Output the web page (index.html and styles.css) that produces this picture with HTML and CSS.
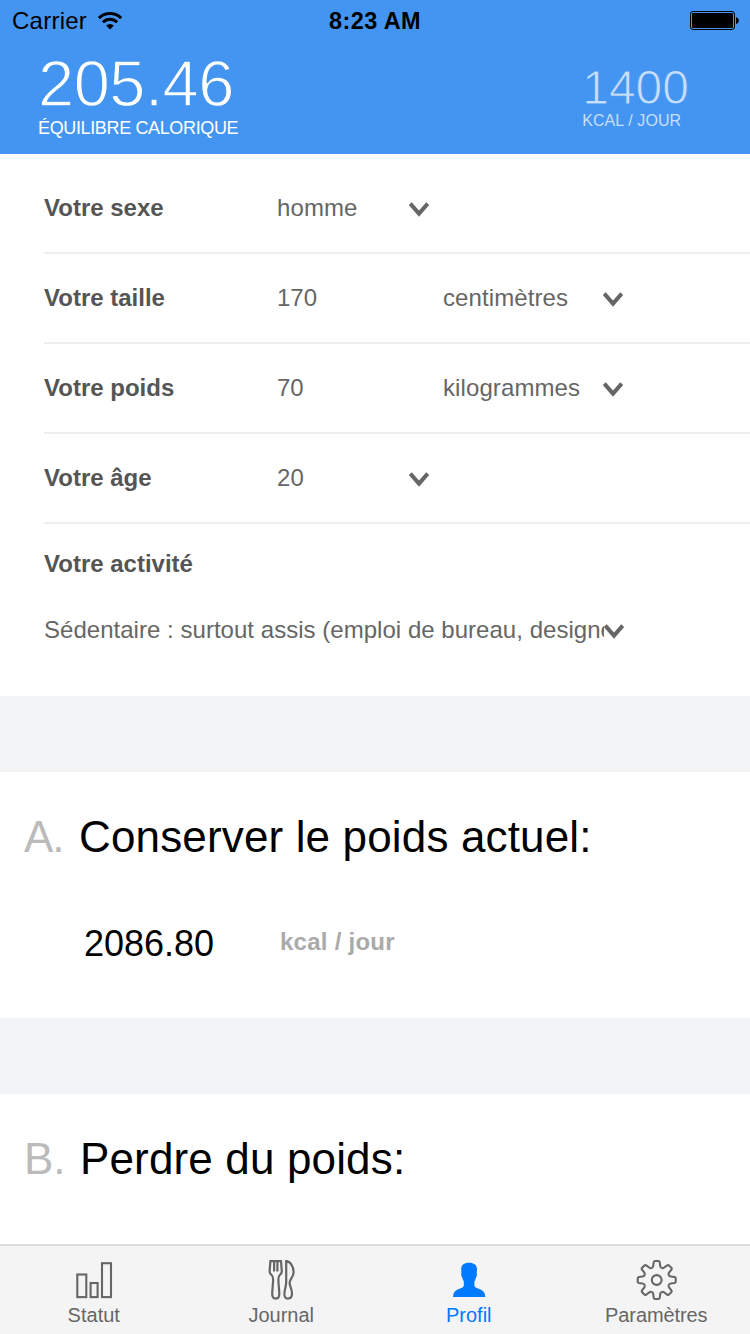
FILE: index.html
```html
<!DOCTYPE html>
<html lang="fr">
<head>
<meta charset="utf-8">
<title>Profil</title>
<link rel="stylesheet" href="styles.css">
</head>
<body>
<div class="app">
  <header class="header">
    <div class="status">
      <div class="carrier">
        <span>Carrier</span>
        <svg class="wifi" viewBox="0 0 26 20">
          <path d="M1.9 7.1A15.6 15.6 0 0 1 24.1 7.1" fill="none" stroke="#000" stroke-width="3"/>
          <path d="M5.9 11.2A10 10 0 0 1 20.1 11.2" fill="none" stroke="#000" stroke-width="2.8"/>
          <path d="M9.1 14.6A5.6 5.6 0 0 1 16.9 14.6L13 18.6Z" fill="#000"/>
        </svg>
      </div>
      <div class="time">8:23 AM</div>
      <svg class="battery" viewBox="0 0 50 20">
        <rect x=".5" y=".5" width="44" height="18" rx="2.5" fill="none" stroke="#000"/>
        <rect x="2" y="2" width="41" height="15" rx="1" fill="#000"/>
        <path d="M46 6.2Q48.8 6.8 48.8 9.6T46 13Z" fill="#000"/>
      </svg>
    </div>
    <div class="summary">
      <div class="balance">
        <div class="balance-value">205.46</div>
        <div class="balance-label">ÉQUILIBRE CALORIQUE</div>
      </div>
      <div class="goal">
        <div class="goal-value">1400</div>
        <div class="goal-label">KCAL / JOUR</div>
      </div>
    </div>
  </header>

  <main class="content">
    <section class="form">
      <div class="row row-first">
        <label>Votre sexe</label>
        <div class="select short"><span>homme</span><svg class="chevron" viewBox="0 0 20 15"><path d="M1.3 1.6L10 11.6L18.7 1.6"/></svg></div>
      </div>
      <div class="row">
        <label>Votre taille</label>
        <span class="value">170</span>
        <div class="select unit"><span>centimètres</span><svg class="chevron" viewBox="0 0 20 15"><path d="M1.3 1.6L10 11.6L18.7 1.6"/></svg></div>
      </div>
      <div class="row">
        <label>Votre poids</label>
        <span class="value">70</span>
        <div class="select unit"><span>kilogrammes</span><svg class="chevron" viewBox="0 0 20 15"><path d="M1.3 1.6L10 11.6L18.7 1.6"/></svg></div>
      </div>
      <div class="row">
        <label>Votre âge</label>
        <div class="select short"><span>20</span><svg class="chevron" viewBox="0 0 20 15"><path d="M1.3 1.6L10 11.6L18.7 1.6"/></svg></div>
      </div>
      <div class="activity">
        <label>Votre activité</label>
        <div class="select wide"><span class="clip">Sédentaire : surtout assis (emploi de bureau, designer)</span><svg class="chevron" viewBox="0 0 20 15"><path d="M1.3 1.6L10 11.6L18.7 1.6"/></svg></div>
      </div>
    </section>

    <section class="card">
      <h2><span class="letter">A.</span><span class="title">Conserver le poids actuel:</span></h2>
      <div class="result"><span class="amount">2086.80</span><span class="per">kcal / jour</span></div>
    </section>

    <section class="card">
      <h2><span class="letter letter-b">B.</span><span class="title">Perdre du poids:</span></h2>
    </section>
  </main>

  <nav class="tabs">
    <a class="tab">
      <svg class="icon" viewBox="0 0 44 44">
        <rect x="5.3" y="16.5" width="9" height="22.6"/>
        <rect x="18.6" y="25" width="7" height="14.1"/>
        <rect x="30" y="5.2" width="9" height="33.9"/>
      </svg>
      <span>Statut</span>
    </a>
    <a class="tab">
      <svg class="icon cutlery" viewBox="0 0 44 44">
        <path d="M11.4 3.2H22L22.8 13.4Q22.9 15.4 20.8 17Q19.4 18.2 19.4 21.2C19.4 27 20.3 32 20.3 36Q20.3 40.6 16.8 40.6Q13.2 40.6 13.2 36C13.2 32 14.1 27 14.1 21.2Q14.1 18.2 12.6 17Q10.5 15.4 10.6 13.4Z"/>
        <path d="M15.1 3V13.4M18.4 3V13.4"/>
        <path d="M27.2 3.2V24C27.2 28.5 25.4 32 25.4 36Q25.4 40.6 28.8 40.6Q33 40.6 33 35.5C33 31 30.6 28 30.6 24.8C30.6 20.8 34.8 19 34.6 14C34.4 8 31 3.2 27.2 3.2Z"/>
      </svg>
      <span>Journal</span>
    </a>
    <a class="tab active">
      <svg class="icon" viewBox="0 0 44 44">
        <path d="M22 4.8C27 4.8 30 7.2 30 11.2L29.7 14.6Q30.4 17.4 29.3 18.8Q28.6 21.6 27.4 23.6V27.4Q27.6 29 29.2 29.8L33.6 31.6Q38.3 33.8 38.3 38.9H6Q6 33.8 10.6 31.6L15 29.8Q16.6 29 16.8 27.4V23.6Q15.6 21.6 14.9 18.8Q13.8 17.4 14.4 14.6L14.2 11.2C14.2 7.2 17 4.8 22 4.8Z"/>
      </svg>
      <span>Profil</span>
    </a>
    <a class="tab">
      <svg class="icon" viewBox="0 0 44 44">
        <defs><path id="tooth" d="M-5 -12.07Q-3.7 -12.6 -3.5 -14.2L-3 -17.8Q-2.8 -19 -1.6 -19H1.6Q2.8 -19 3 -17.8L3.5 -14.2Q3.7 -12.6 5 -12.07"/></defs>
        <g transform="translate(22.7 22)">
          <circle r="4.9"/>
          <use href="#tooth"/>
          <use href="#tooth" transform="rotate(45)"/>
          <use href="#tooth" transform="rotate(90)"/>
          <use href="#tooth" transform="rotate(135)"/>
          <use href="#tooth" transform="rotate(180)"/>
          <use href="#tooth" transform="rotate(225)"/>
          <use href="#tooth" transform="rotate(270)"/>
          <use href="#tooth" transform="rotate(315)"/>
        </g>
      </svg>
      <span class="settings">Paramètres</span>
    </a>
  </nav>
</div>
</body>
</html>
```
FILE: styles.css
```css
* { box-sizing: border-box; }
body {
  margin: 0;
  font-family: "Liberation Sans", Arial, sans-serif;
  background: #fff;
  color: #000;
}
.app {
  width: 750px;
  height: 1334px;
  display: flex;
  flex-direction: column;
  overflow: hidden;
}

/* Header */
.header {
  height: 154px;
  flex: none;
  background: #4495f1;
}
.status {
  height: 40px;
  padding: 0 11px 0 12px;
  display: grid;
  grid-template-columns: 1fr auto 1fr;
  align-items: center;
  font-size: 24px;
  line-height: 40px;
}
.carrier { display: flex; align-items: center; gap: 10px; letter-spacing: .25px; }
.wifi { width: 26px; height: 20px; }
.time { font-weight: bold; font-size: 23.5px; letter-spacing: .4px; padding-top: 1px; margin-left: -1px; }
.battery { width: 50px; height: 20px; justify-self: end; margin-right: -1px; }
.summary {
  display: flex;
  justify-content: space-between;
  padding: 12px 61px 0 38px;
  color: #fff;
  white-space: nowrap;
}
.balance-value {
  font-size: 65px;
  line-height: 64px;
  letter-spacing: -.5px;
  -webkit-text-stroke: 1.3px #4495f1;
}
.balance-label { font-size: 18px; line-height: 24px; letter-spacing: -.36px; }
.goal { padding-top: 12px; color: #c7dffb; }
.goal-value {
  font-size: 48px;
  line-height: 48px;
  -webkit-text-stroke: 1px #4495f1;
}
.goal-label { font-size: 16px; line-height: 18px; letter-spacing: .08px; }

/* Form */
.content { flex: 1; min-height: 0; overflow: hidden; }
.form {
  height: 542px;
  padding-left: 44px;
  font-size: 24px;
  line-height: 28px;
  color: #666;
}
label { font-weight: bold; color: #555; }
.row {
  height: 90px;
  border-bottom: 2px solid #eee;
  display: grid;
  grid-template-columns: 233px 166px 1fr;
  align-items: center;
}
.row-first { height: 100px; padding-top: 10px; }
.select {
  display: flex;
  align-items: center;
  justify-content: space-between;
  letter-spacing: .1px;
}
.short { width: 152px; }
.unit { width: 180px; }
.wide { width: 580px; margin-top: 38px; letter-spacing: .03px; }
.clip { width: 560px; flex: none; overflow: hidden; white-space: nowrap; }
.chevron {
  width: 20px;
  height: 15px;
  margin-top: 3px;
  flex: none;
  fill: none;
  stroke: #666;
  stroke-width: 4;
}
.activity { padding-top: 26px; }
.activity label { display: block; }

/* Result cards */
.card {
  height: 322px;
  border-top: 76px solid #f2f3f5;
  padding: 40px 24px 0;
}
h2 {
  margin: 0;
  display: flex;
  font-size: 44px;
  line-height: 50px;
  font-weight: normal;
}
.letter { width: 55px; color: #bbb; letter-spacing: -1px; }
.letter-b { width: 56px; letter-spacing: 0; }
.title { letter-spacing: .15px; }
.result { display: flex; align-items: center; padding: 60px 0 0 60px; }
.amount { width: 196px; font-size: 36px; line-height: 44px; }
.per {
  margin-top: -5px;
  font-size: 24px;
  line-height: 28px;
  font-weight: bold;
  letter-spacing: .25px;
  color: #aaa;
}

/* Tab bar */
.tabs {
  height: 90px;
  flex: none;
  display: grid;
  grid-template-columns: repeat(4, 1fr);
  background: #f4f4f4;
  border-top: 2px solid #dcdcdc;
}
.tab {
  padding-top: 12px;
  display: flex;
  flex-direction: column;
  align-items: center;
  font-size: 20px;
  line-height: 26px;
  color: #666;
}
.icon {
  width: 44px;
  height: 44px;
  fill: none;
  stroke: #666;
  stroke-width: 2.1;
}
.cutlery { stroke-width: 2.2; }
.settings { letter-spacing: -.1px; }
.active { color: #007aff; }
.active .icon { fill: #007aff; stroke: none; }
```
